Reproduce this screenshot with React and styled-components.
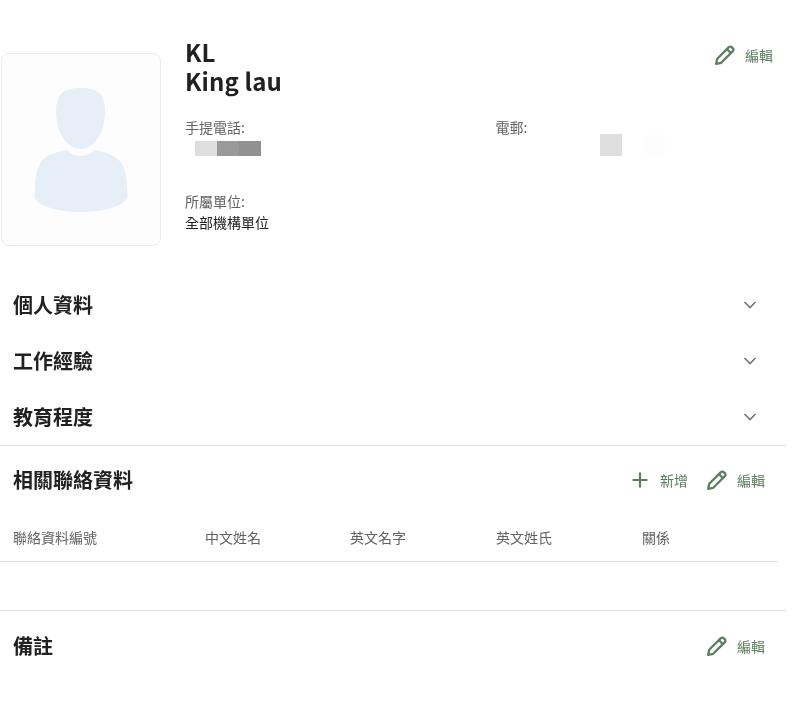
import React from "react";
import styled, { createGlobalStyle } from "styled-components";

const Global = createGlobalStyle`
  html, body { margin: 0; padding: 0; background: #fff; }
  body { font-family: "Noto Sans CJK TC", "Noto Sans", sans-serif; color: #212121; }
`;
const Page = styled.div`width: 786px; padding-top: 38px; display: flex; flex-direction: column; will-change: opacity;`;
const Profile = styled.section`display: flex; align-items: flex-start; height: 239px;`;
const AvatarCard = styled.div`
  width: 158px; height: 190px; padding-top: 1px; margin: 15px 0 0 1px; flex: none;
  background: #fdfdfd; border: 1px solid #ececec; border-radius: 8px;
  display: flex; align-items: center; justify-content: center;
`;
const Info = styled.div`flex: 1; margin-left: 24px; display: flex; flex-direction: column;`;
const NameRow = styled.div`display: flex; justify-content: space-between; align-items: flex-start; padding-right: 13px;`;
const Name = styled.h1`margin: -1px 0 1px; font-size: 24px; line-height: 29px; font-weight: 700; letter-spacing: 0.12px; color: #212121;`;
const FieldGrid = styled.div`display: grid; grid-template-columns: 310.5px 1fr; margin-top: 21px;`;
const Field = styled.div`font-size: 14px; line-height: 20px; height: 74px;`;
const Label = styled.div`color: #616161;`;
const Value = styled.div`color: #212121; line-height: 22px;`;
const Mosaic = styled.div`display: flex; margin: ${p => p.$top}px 0 0 ${p => p.$left}px;`;
const Tile = styled.span`display: block; width: 22px; height: ${p => p.$h}px; background: ${p => p.$c}; margin-left: ${p => p.$gap || 0}px;`;
const Action = styled.span`
  display: inline-flex; align-items: center; gap: ${p => p.$gap || 9}px;
  margin-top: ${p => p.$top || 0}px;
  font-size: 14px; line-height: 20px; color: #5c7f5f;
`;
const Actions = styled.div`display: flex; align-items: center; gap: 18px;`;
const Accordion = styled.div`display: flex; flex-direction: column; border-bottom: 1px solid #e0e0e0;`;
const AccRow = styled.div`
  height: 56px; display: flex; align-items: center; justify-content: space-between;
  padding: 0 29.5px 0 13px;
`;
const Title = styled.h2`margin: 0; font-size: 20px; line-height: 28px; font-weight: 700; color: #212121;`;
const SectionHead = styled.div`
  height: ${p => p.$h}px; display: flex; align-items: center; justify-content: space-between;
  padding: 0 21px 0 13px;
`;
const Table = styled.div`
  width: 778px; height: 45px; display: grid; grid-template-columns: 192px 145px 146px 146px 1fr;
  padding: 6px 0 0 13px; box-sizing: border-box; border-bottom: 1px solid #e0e0e0;
  margin-top: 3px; align-items: start;
`;
const Th = styled.div`font-size: 14px; line-height: 28px; color: #616161;`;
const Divider = styled.div`height: 1px; background: #e0e0e0; margin-top: 48px;`;

const PencilIcon = () => (
  <svg width="22" height="22" viewBox="0 0 22 22" fill="none" stroke="#5c7f5f" strokeWidth="2.3" strokeLinejoin="round">
    <path d="M2.2 19.8 L3.2 14.8 L14.9 3.1 a1.9 1.9 0 0 1 2.7 0 L18.9 4.4 a1.9 1.9 0 0 1 0 2.7 L7.2 18.8 Z" />
    <path d="M13 5.2 L16.8 9" />
  </svg>
);
const PlusIcon = () => (
  <svg width="16" height="16" viewBox="0 0 16 16" stroke="#5c7f5f" strokeWidth="2.2">
    <path d="M8 0.5 V15.5 M0.5 8 H15.5" />
  </svg>
);
const Chevron = () => (
  <svg width="14" height="8" viewBox="0 0 14 8" fill="none" stroke="#757575" strokeWidth="1.6">
    <path d="M1.5 1 L7 6.5 L12.5 1" />
  </svg>
);
const AvatarArt = () => (
  <svg width="94" height="125" viewBox="0 0 94 125" fill="#e6eef7">
    <path d="M46.5 0 C64 0 71 6 71 24 C71 44 60 61 46.5 61 C33 61 22 44 22 24 C22 6 29 0 46.5 0 Z" />
    <path d="M33 62 C38 70 55 70 60 62 C78 65 90 71 92 88 C93 97 93.5 104 93.5 110 C87 120 66 124 47 124 C28 124 7 120 0.5 110 C0.5 104 1 97 2 88 C4 71 15 65 33 62 Z" />
  </svg>
);

export default function App() {
  return (
    <Page>
      <Global />
      <Profile>
        <AvatarCard><AvatarArt /></AvatarCard>
        <Info>
          <NameRow>
            <Name>KL<br />King lau</Name>
            <Action $top={6}><PencilIcon />編輯</Action>
          </NameRow>
          <FieldGrid>
            <Field>
              <Label>手提電話:</Label>
              <Mosaic $top={4} $left={10}>
                <Tile $h={15} $c="#dedede" /><Tile $h={15} $c="#999" /><Tile $h={15} $c="#919191" />
              </Mosaic>
            </Field>
            <Field>
              <Label>電郵:</Label>
              <Mosaic $top={-3} $left={104.5}>
                <Tile $h={22} $c="#dedede" /><Tile $h={22} $c="#fdfdfd" $gap={22} />
              </Mosaic>
            </Field>
            <Field>
              <Label>所屬單位:</Label>
              <Value>全部機構單位</Value>
            </Field>
          </FieldGrid>
        </Info>
      </Profile>
      <Accordion>
        {["個人資料", "工作經驗", "教育程度"].map(t => (
          <AccRow key={t}><Title>{t}</Title><Chevron /></AccRow>
        ))}
      </Accordion>
      <SectionHead $h={68}>
        <Title>相關聯絡資料</Title>
        <Actions>
          <Action $gap={12}><PlusIcon />新增</Action>
          <Action><PencilIcon />編輯</Action>
        </Actions>
      </SectionHead>
      <Table>
        {["聯絡資料編號", "中文姓名", "英文名字", "英文姓氏", "關係"].map(t => <Th key={t}>{t}</Th>)}
      </Table>
      <Divider />
      <SectionHead $h={70}>
        <Title>備註</Title>
        <Action><PencilIcon />編輯</Action>
      </SectionHead>
    </Page>
  );
}
